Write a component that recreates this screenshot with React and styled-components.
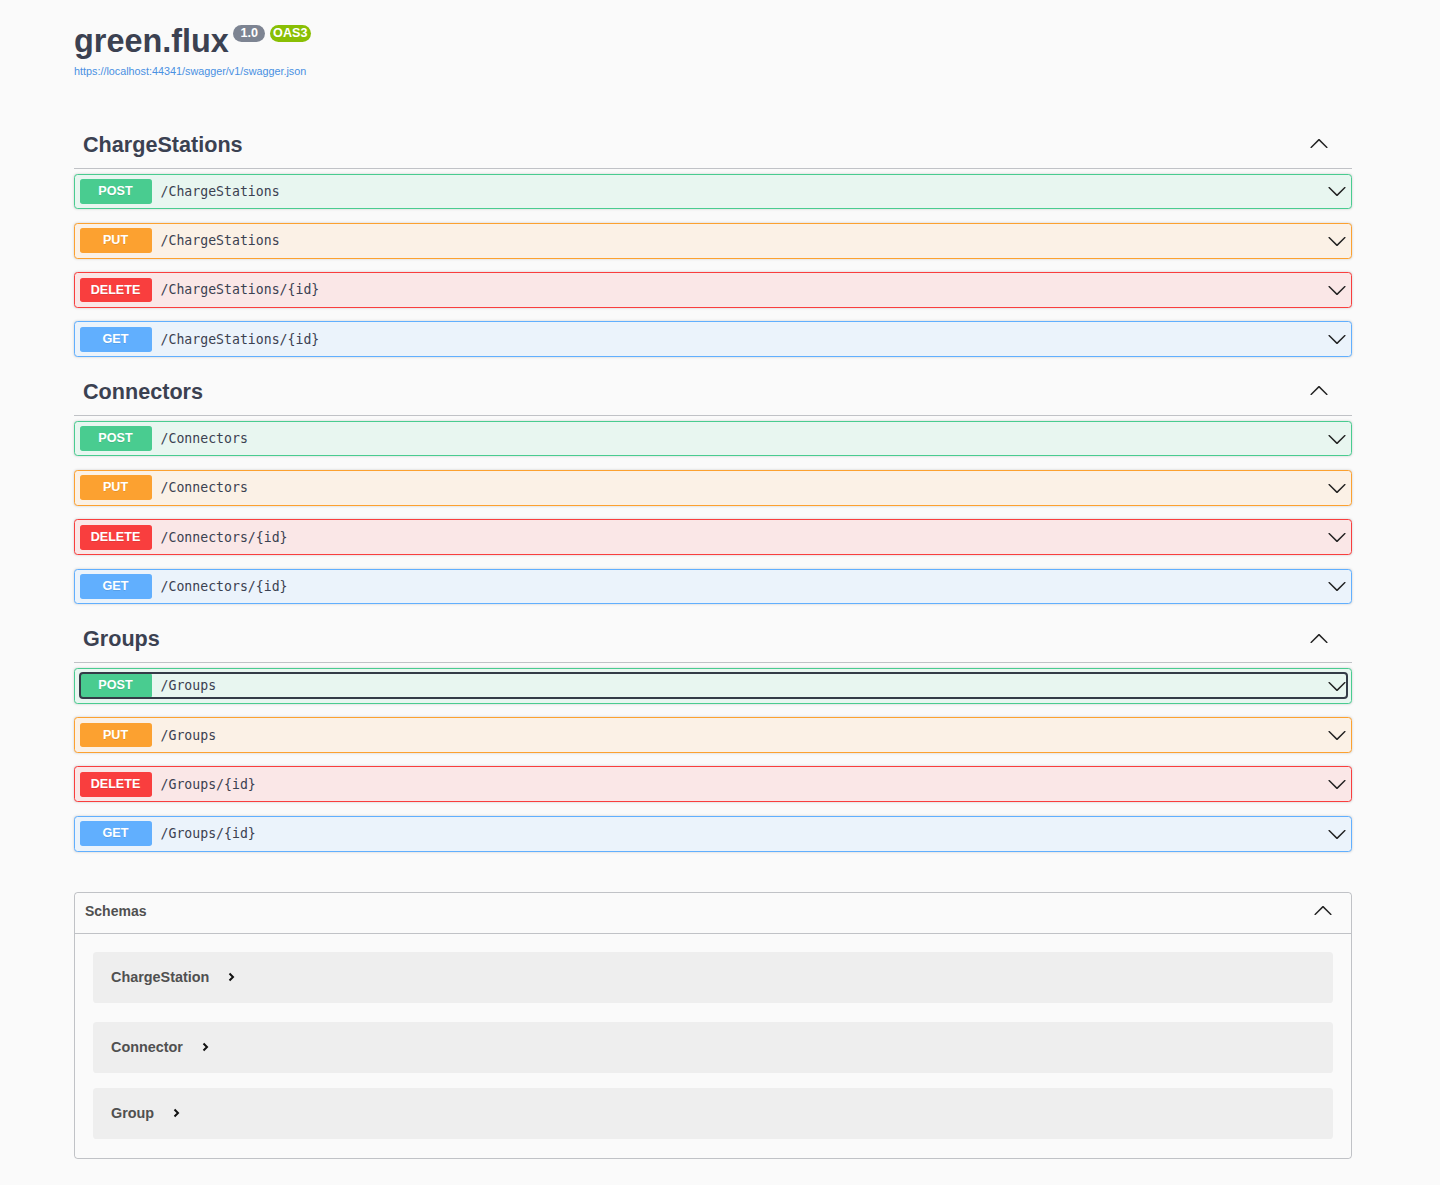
import React from 'react';
import styled, { createGlobalStyle, css } from 'styled-components';

const GlobalStyle = createGlobalStyle`
  body {
    margin: 0;
    background: #fafafa;
    font-family: 'Liberation Sans', Arial, sans-serif;
    color: #3b4151;
  }
`;

const METHODS = {
  POST: { color: '#49cc90', bg: '#e8f6f0' },
  PUT: { color: '#fca130', bg: '#fbf1e6' },
  DELETE: { color: '#f93e3e', bg: '#fae7e7' },
  GET: { color: '#61affe', bg: '#ebf3fb' },
};

const Page = styled.div`
  padding: 23px 0 20px 74px;
`;

const Content = styled.div`
  width: 1278px;
`;

const Info = styled.div`
  margin-bottom: 46.3px;
`;

const TitleRow = styled.div`
  display: flex;
  align-items: flex-start;
`;

const Title = styled.h2`
  margin: 0;
  font-size: 32.4px;
  font-weight: 700;
  line-height: normal;
  color: #3b4151;
`;

const Stamp = styled.span`
  margin: 2px 0 0 4.5px;
  padding: 1.8px 3.6px;
  border-radius: 57px;
  background: ${(p) => p.$color};
  color: #fff;
  font-size: 12.6px;
  font-weight: 700;
  line-height: 13.6px;
  white-space: pre;
`;

const SpecLink = styled.a`
  display: block;
  margin-top: 4.8px;
  font-size: 10.8px;
  line-height: 12.4px;
  color: #4990e2;
  text-decoration: none;
`;

const TagSection = styled.section`
  display: flex;
  flex-direction: column;
`;

const TagHeader = styled.div`
  display: flex;
  align-items: center;
  padding: 8.5px 23px 9.5px 9px;
  margin-bottom: 4.5px;
  border-bottom: 1px solid rgba(59, 65, 81, 0.3);
`;

const TagName = styled.h3`
  flex: 1;
  margin: 0;
  font-size: 21.6px;
  font-weight: 700;
  line-height: 26.5px;
  color: #3b4151;
`;

const Arrow = styled.svg`
  display: block;
  flex: none;
  width: 20px;
  height: 20px;
  fill: #222;
  margin-top: ${(p) => p.$shift || 0}px;
`;

const OpBlock = styled.div`
  margin-bottom: 13.5px;
  padding: 4.5px;
  border: 1px solid ${(p) => METHODS[p.$method].color};
  border-radius: 3.6px;
  background: ${(p) => METHODS[p.$method].bg};
  box-shadow: 0 0 2.7px rgba(0, 0, 0, 0.19);
`;

const Summary = styled.div`
  display: flex;
  align-items: center;
  border-radius: 3px;
  ${(p) =>
    p.$focused &&
    css`
      outline: 2px solid #343b47;
      outline-offset: -1px;
    `}
`;

const Method = styled.span`
  flex: none;
  width: 72px;
  height: 24.8px;
  line-height: 24.8px;
  border-radius: 2.7px;
  background: ${(p) => METHODS[p.$method].color};
  color: #fff;
  font-size: 12.6px;
  font-weight: 700;
  text-align: center;
  text-shadow: 0 1px 0 rgba(0, 0, 0, 0.1);
`;

const Path = styled.span`
  flex: 1;
  padding: 0 9px;
  font-family: 'DejaVu Sans Mono', 'Liberation Mono', monospace;
  font-size: 13.2px;
  font-weight: 400;
  color: #3b4151;
`;

const Models = styled.section`
  margin-top: 26.7px;
  border: 1px solid rgba(59, 65, 81, 0.3);
  border-radius: 3.6px;
`;

const ModelsHeader = styled.div`
  display: flex;
  align-items: center;
  height: 22px;
  padding: 7px 18px 11px 10px;
  border-bottom: 1px solid rgba(59, 65, 81, 0.3);
`;

const ModelsTitle = styled.h4`
  flex: 1;
  margin: 0;
  font-size: 14px;
  font-weight: 700;
  color: #505050;
`;

const ModelList = styled.div`
  display: flex;
  flex-direction: column;
  padding: 18px 18px 19.5px;
`;

const Model = styled.div`
  display: flex;
  align-items: center;
  height: 51px;
  margin-top: ${(p) => p.$gap}px;
  padding: 0 18px;
  border-radius: 3.6px;
  background: #eeeeee;
`;

const ModelTitle = styled.span`
  font-size: 14.4px;
  font-weight: 700;
  color: #505050;
`;

const Caret = styled.svg`
  margin-left: 19px;
  width: 7px;
  height: 10px;
`;

const DOWN =
  'M17.418 6.109c.272-.268.709-.268.979 0s.271.701 0 .969l-7.908 7.83c-.27.268-.707.268-.979 0l-7.908-7.830c-.27-.268-.27-.701 0-.969.271-.268.709-.268.979 0L10 13.25l7.418-7.141z';

const Chevron = ({ up, shift }) => (
  <Arrow viewBox="0 0 20 20" $shift={shift}>
    <path d={DOWN} transform={up ? 'rotate(180 10 10)' : undefined} />
  </Arrow>
);

const tags = [
  { name: 'ChargeStations', base: '/ChargeStations' },
  { name: 'Connectors', base: '/Connectors' },
  { name: 'Groups', base: '/Groups', focus: true },
];

const models = [
  { name: 'ChargeStation', gap: 0 },
  { name: 'Connector', gap: 19 },
  { name: 'Group', gap: 15 },
];

const App = () => {
  return (
    <Page>
      <GlobalStyle />
      <Content>
        <Info>
          <TitleRow>
            <Title>green.flux</Title>
            <Stamp $color="#7d8492"> 1.0 </Stamp>
            <Stamp $color="#89bf04">OAS3</Stamp>
          </TitleRow>
          <SpecLink href="#">https://localhost:44341/swagger/v1/swagger.json</SpecLink>
        </Info>

        {tags.map((tag) => {
          const ops = [
            ['POST', tag.base],
            ['PUT', tag.base],
            ['DELETE', `${tag.base}/{id}`],
            ['GET', `${tag.base}/{id}`],
          ];
          return (
            <TagSection key={tag.name}>
              <TagHeader>
                <TagName>{tag.name}</TagName>
                <Chevron up shift={-2} />
              </TagHeader>
              {ops.map(([method, path], i) => (
                <OpBlock key={method} $method={method}>
                  <Summary $focused={tag.focus && i === 0}>
                    <Method $method={method}>{method}</Method>
                    <Path>{path}</Path>
                    <Chevron />
                  </Summary>
                </OpBlock>
              ))}
            </TagSection>
          );
        })}

        <Models>
          <ModelsHeader>
            <ModelsTitle>Schemas</ModelsTitle>
            <Chevron up />
          </ModelsHeader>
          <ModelList>
            {models.map((m) => (
              <Model key={m.name} $gap={m.gap}>
                <ModelTitle>{m.name}</ModelTitle>
                <Caret viewBox="0 0 7 10">
                  <path d="M1.5 1.5 L5 5 L1.5 8.5" fill="none" stroke="#111" strokeWidth="2" />
                </Caret>
              </Model>
            ))}
          </ModelList>
        </Models>
      </Content>
    </Page>
  );
};

export default App;
